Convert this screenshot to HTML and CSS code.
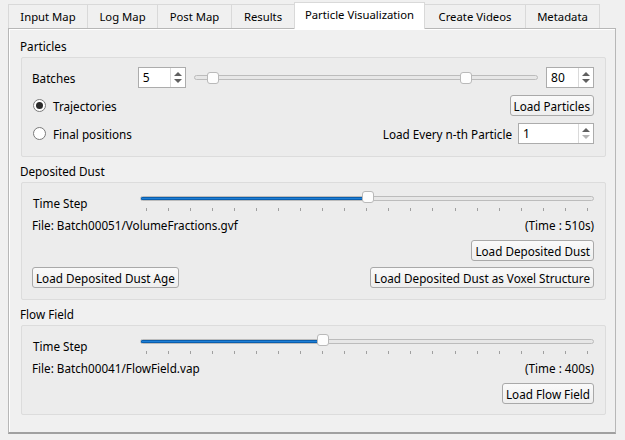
FILE: index.html
```html
<!DOCTYPE html>
<html>
<head>
<meta charset="utf-8">
<link rel="stylesheet" href="styles.css">
</head>
<body>
<div class="window">
  <div class="tabs">
    <div class="tab t-input">Input Map</div>
    <div class="tab t-log">Log Map</div>
    <div class="tab t-post">Post Map</div>
    <div class="tab t-results">Results</div>
    <div class="tab t-particle active">Particle Visualization</div>
    <div class="tab t-videos">Create Videos</div>
    <div class="tab t-meta">Metadata</div>
  </div>
  <div class="pane">
    <div class="group-title">Particles</div>
    <div class="group g-particles">
      <div class="row r-batches">
        <span class="label lbl-batches">Batches</span>
        <div class="spin sp-small"><span class="val">5</span><span class="arrows"><i class="up"></i><i class="down"></i></span></div>
        <div class="range">
          <div class="groove"></div>
          <div class="handle" style="left:13px"></div>
          <div class="handle" style="left:266px"></div>
        </div>
        <div class="spin sp-small"><span class="val">80</span><span class="arrows"><i class="up"></i><i class="down"></i></span></div>
      </div>
      <div class="row r-traj">
        <label class="radio"><span class="dot checked"></span>Trajectories</label>
        <button class="btn">Load Particles</button>
      </div>
      <div class="row r-final">
        <label class="radio"><span class="dot"></span>Final positions</label>
        <div class="nth">
          <span class="label">Load Every n-th Particle</span>
          <div class="spin sp-wide"><span class="val">1</span><span class="arrows"><i class="up"></i><i class="down dis"></i></span></div>
        </div>
      </div>
    </div>

    <div class="group-title">Deposited Dust</div>
    <div class="group g-dust">
      <div class="row r-slider">
        <span class="label lbl-step">Time Step</span>
        <div class="slider">
          <div class="groove"><div class="fill" style="width:228px"></div></div>
          <div class="handle" style="left:222px"></div>
          <div class="ticks"><i></i><i></i><i></i><i></i><i></i><i></i><i></i><i></i><i></i><i></i><i></i><i></i><i></i><i></i><i></i><i></i><i></i><i></i><i></i><i></i><i></i></div>
        </div>
      </div>
      <div class="row r-file">
        <span>File: Batch00051/VolumeFractions.gvf</span>
        <span>(Time : 510s)</span>
      </div>
      <div class="row r-right">
        <button class="btn">Load Deposited Dust</button>
      </div>
      <div class="row r-two">
        <button class="btn">Load Deposited Dust Age</button>
        <button class="btn">Load Deposited Dust as Voxel Structure</button>
      </div>
    </div>

    <div class="group-title">Flow Field</div>
    <div class="group g-flow">
      <div class="row r-slider">
        <span class="label lbl-step">Time Step</span>
        <div class="slider">
          <div class="groove"><div class="fill" style="width:183px"></div></div>
          <div class="handle" style="left:177px"></div>
          <div class="ticks"><i></i><i></i><i></i><i></i><i></i><i></i><i></i><i></i><i></i><i></i><i></i><i></i><i></i><i></i><i></i><i></i><i></i><i></i><i></i><i></i><i></i></div>
        </div>
      </div>
      <div class="row r-file">
        <span>File: Batch00041/FlowField.vap</span>
        <span>(Time : 400s)</span>
      </div>
      <div class="row r-right">
        <button class="btn">Load Flow Field</button>
      </div>
    </div>
  </div>
</div>
</body>
</html>
```

FILE: styles.css
```css
* { box-sizing: border-box; }
html, body { margin: 0; padding: 0; }
body {
  background: #f0f0f0;
  font-family: "Noto Sans", "Open Sans", sans-serif;
  font-size: 11.7px;
  color: #000;
  width: 625px;
  height: 440px;
  overflow: hidden;
}
.window { padding: 2px 9px 0 8px; }

.tabs { display: flex; align-items: flex-end; height: 26px; position: relative; z-index: 1; font-size: 11.3px; }
.tab {
  height: 24px;
  display: flex; align-items: center; justify-content: center;
  background: #f0f0f0;
  border: 1px solid #d9d9d9;
  border-bottom: none;
  margin-right: -1px;
  white-space: nowrap;
  padding-bottom: 1px;
}
.t-input { width: 80px; }
.t-log { width: 71px; }
.t-post { width: 75px; }
.t-results { width: 64px; }
.t-particle { width: 131px; }
.t-videos { width: 102px; }
.t-meta { width: 75px; }
.tab.active {
  height: 27px;
  margin-bottom: -1px;
  background: #fff;
  padding-bottom: 4px;
}

.pane {
  height: 406px;
  border: 1px solid #b7b7b7;
  border-bottom: 2px solid #a0a0a0;
  box-shadow: inset 1px 1px 0 #fff;
  padding: 9px 9px 0 11px;
  background: #f0f0f0;
}

.group-title { height: 16px; line-height: 16px; margin-bottom: 3px; }
.group {
  margin-left: 1px;
  border: 1px solid #dcdcdc;
  background: #ececec;
  border-radius: 2px;
  padding: 0 11px 0 10px;
  margin-bottom: 6px;
}
.g-particles { height: 100px; padding-top: 9px; }
.g-dust { height: 118px; padding-top: 7px; }
.g-flow { height: 90px; padding-top: 7px; }

.row { display: flex; align-items: center; justify-content: space-between; }
.label { white-space: nowrap; }

.r-batches { height: 21px; justify-content: flex-start; }
.lbl-batches { width: 106px; }
.r-traj { height: 21px; margin-top: 7px; }
.r-final { height: 21px; margin-top: 7px; }

.spin {
  display: flex;
  height: 21px;
  background: #fff;
  border: 1px solid #acacac;
  align-items: stretch;
}
.sp-small { width: 48px; }
.sp-wide { width: 76px; }
.spin .val { flex: 1; padding-left: 4px; line-height: 19px; font-size: 12px; }
.arrows { width: 15px; border-left: 1px solid #dadada; display: flex; flex-direction: column; justify-content: center; align-items: center; gap: 3px; }
.arrows i { display: block; width: 0; height: 0; border-left: 4px solid transparent; border-right: 4px solid transparent; }
.arrows .up { border-bottom: 4px solid #606060; }
.arrows .down { border-top: 4px solid #606060; }
.arrows .down.dis { border-top-color: #b4b4b4; }

.range { position: relative; width: 345px; height: 21px; margin: 0 8px; }
.range .groove { position: absolute; left: 0; right: 0; top: 8px; height: 5px; background: #e7e7e7; border: 1px solid #bcbcbc; border-radius: 3px; }
.handle {
  position: absolute;
  top: 5px;
  width: 12px; height: 12px;
  background: #fdfdfd;
  border: 1px solid #b9b9b9;
  border-radius: 3px;
}

.radio { display: flex; align-items: center; white-space: nowrap; margin-left: 1px; }
.dot {
  width: 13px; height: 13px;
  border: 1px solid #7a7a7a;
  border-radius: 50%;
  background: #fff;
  margin-right: 7px;
  display: flex; align-items: center; justify-content: center;
}
.dot.checked::after { content: ""; width: 7px; height: 7px; border-radius: 50%; background: #2b2b2b; }

.nth { display: flex; align-items: center; gap: 6px; }

.btn {
  font: inherit;
  color: #000;
  height: 21px;
  padding: 0 3px;
  background: linear-gradient(#fafafa, #eeeeee);
  border: 1px solid #a9a9a9;
  border-radius: 3px;
  white-space: nowrap;
}

.r-slider { height: 23px; justify-content: flex-start; align-items: flex-start; }
.lbl-step { width: 107px; margin-left: 1px; padding-top: 5px; }
.slider { position: relative; width: 456px; height: 23px; }
.slider .groove { position: absolute; left: 0; right: 0; top: 6px; height: 5px; background: #e7e7e7; border: 1px solid #bcbcbc; border-radius: 3px; overflow: hidden; }
.slider .fill { height: 100%; background: #1e7fd6; box-shadow: inset 0 0 0 1px #0a5fae; }
.slider .handle { top: 1px; }
.ticks { position: absolute; left: 6px; right: 6px; top: 18px; display: flex; justify-content: space-between; }
.ticks i { display: block; width: 1px; height: 3px; background: #a0a0a0; }

.r-file { height: 16px; margin-top: 4px; }
.r-right { justify-content: flex-end; margin-top: 7px; }
.r-two { margin-top: 6px; }
```
